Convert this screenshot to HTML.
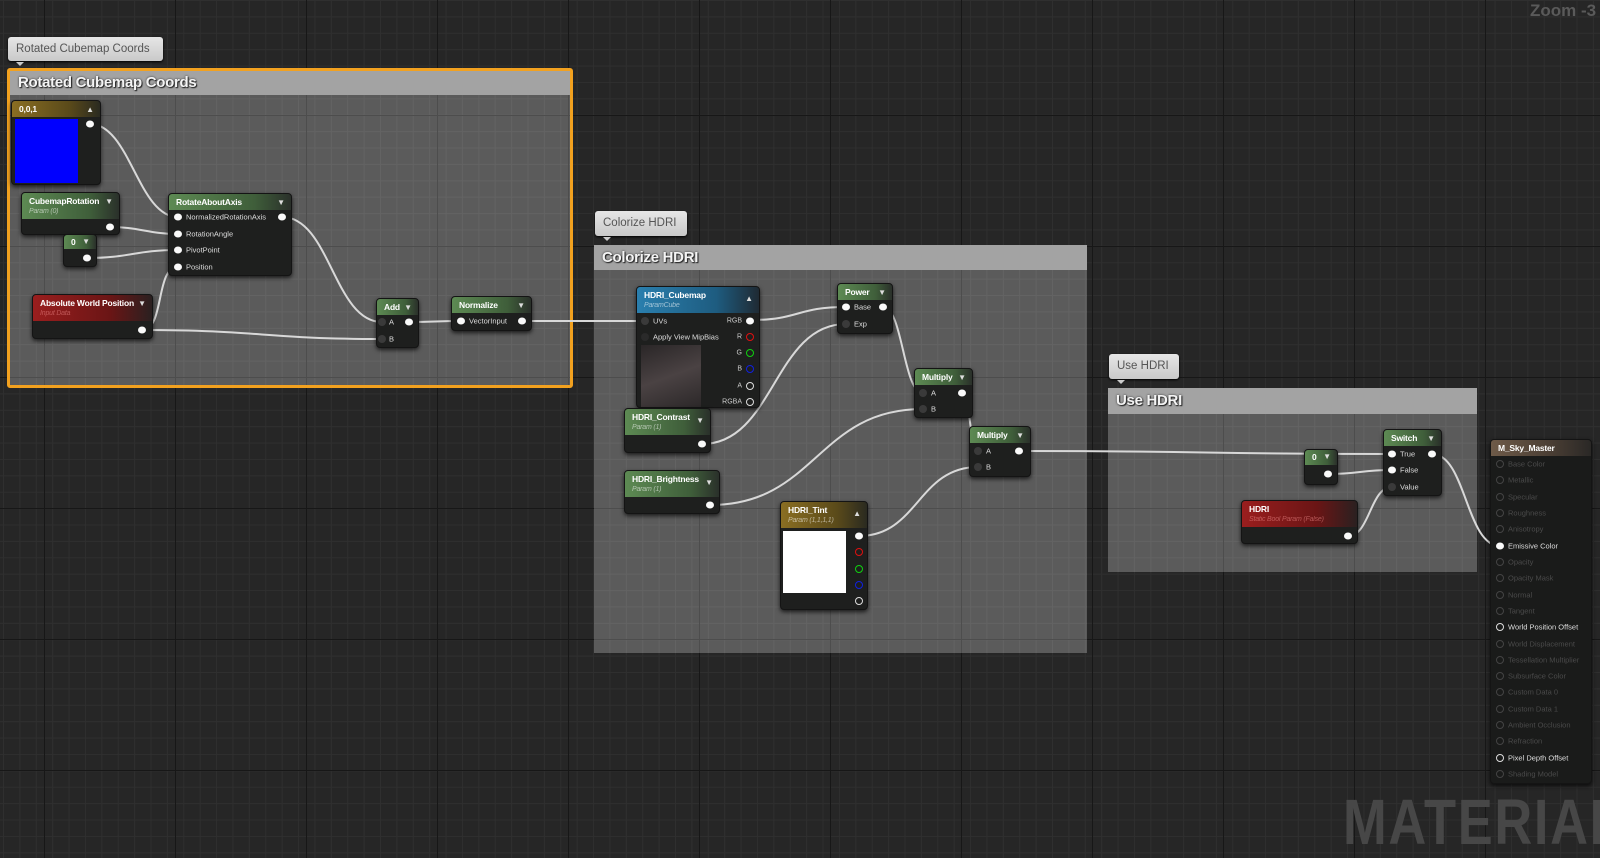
<!DOCTYPE html>
<html><head><meta charset="utf-8"><style>
*{margin:0;padding:0;box-sizing:border-box}
body{width:1600px;height:837px;overflow:hidden;position:relative;font-family:"Liberation Sans",sans-serif;
background-color:#262626;
background-image:
linear-gradient(to right,#171717 1px,transparent 1px),
linear-gradient(to bottom,#171717 1px,transparent 1px),
linear-gradient(to right,#2f2f2f 1px,transparent 1px),
linear-gradient(to bottom,#2f2f2f 1px,transparent 1px);
background-size:131px 131px,131px 131px,16.4px 16.4px,16.4px 16.4px;
background-position:44px 0,0 115px,3px 0,0 0;}
.bub{position:absolute;background:linear-gradient(#e6e6e6,#c9c9c9);border-radius:3px;color:#555;font-size:11.5px;padding:0 8px;line-height:24px;white-space:nowrap;box-shadow:0 1px 2px #000}
.bub:after{content:"";position:absolute;left:8px;bottom:-5px;border:4px solid transparent;border-top-color:#ccc;border-bottom:0}
.cm{position:absolute;background-color:#5b5b5b;
background-image:linear-gradient(to right,#4d4d4d 1px,transparent 1px),linear-gradient(to bottom,#4d4d4d 1px,transparent 1px),linear-gradient(to right,#636363 1px,transparent 1px),linear-gradient(to bottom,#636363 1px,transparent 1px);
background-size:131px 131px,131px 131px,16.4px 16.4px,16.4px 16.4px;background-position:44px 0,0 115px,3px 0,0 0;background-attachment:fixed}
.ch{position:absolute;left:0;right:0;top:0;background:#a3a3a3;color:#f4f4f4;font-weight:bold;font-size:15px;padding-left:8px;text-shadow:1px 1px 1px #222,0 0 2px #333;letter-spacing:-0.3px;white-space:nowrap}
.n{position:absolute;background:#1e1f1e;border-radius:4px;box-shadow:0 2px 4px rgba(0,0,0,.7);border:1px solid #141414}
.h{position:absolute;left:0;right:0;top:0;border-radius:3px 3px 0 0;color:#fff;font-weight:bold;font-size:8.5px;padding:3px 0 0 7px;white-space:nowrap;letter-spacing:-0.2px}
.h i{display:block;font-weight:normal;font-size:7px;margin-top:2px;opacity:.55}
.g{background:linear-gradient(to right,#5d8a53,#3f5e3a 70%,#2a302a)}
.r{background:linear-gradient(to right,#9a1e1e,#6a1515 65%,#2a2020)}
.y{background:linear-gradient(to right,#8a6e22,#5a4a1a 65%,#2a2a20)}
.b{background:linear-gradient(to right,#2a7fae,#1e5c80 65%,#1f2a33)}
.a{position:absolute;right:6px;top:4px;font-size:8px;color:#ddd}
.p{position:absolute;width:8px;height:7px;border-radius:50%;background:#fafafa;transform:translate(-50%,-50%)}
.o{position:absolute;width:8px;height:8px;border-radius:50%;border:1.6px solid #ddd;transform:translate(-50%,-50%)}
.d{position:absolute;width:8px;height:8px;border-radius:50%;background:#3a3a3a;transform:translate(-50%,-50%)}
.l{position:absolute;font-size:7.5px;color:#ddd;transform:translateY(-50%);white-space:nowrap}
.lr{position:absolute;font-size:7px;color:#ccc;transform:translate(-100%,-50%);white-space:nowrap}
.m{position:absolute;font-size:7.5px;color:#4a4a4a;transform:translateY(-50%);white-space:nowrap}
</style></head><body>

<div style="position:absolute;left:1530px;top:1px;font-size:17px;font-weight:bold;color:#5a5a5a">Zoom -3</div>
<div style="position:absolute;left:1343px;top:790px;font-size:64px;font-weight:bold;color:#474747;line-height:1;transform:scaleX(0.82);transform-origin:left top;letter-spacing:2px">MATERIAL</div>

<!-- comments -->
<div class="bub" style="left:8px;top:37px;width:155px;height:24px">Rotated Cubemap Coords</div>
<div class="cm" style="left:7px;top:68px;width:566px;height:320px;border:3px solid #f2a11f;border-radius:3px">
 <div class="ch" style="height:24px;line-height:24px">Rotated Cubemap Coords</div></div>

<div class="bub" style="left:595px;top:211px;width:92px;height:25px">Colorize HDRI</div>
<div class="cm" style="left:594px;top:245px;width:493px;height:408px">
 <div class="ch" style="height:25px;line-height:25px">Colorize HDRI</div></div>

<div class="bub" style="left:1109px;top:354px;width:70px;height:25px">Use HDRI</div>
<div class="cm" style="left:1108px;top:388px;width:369px;height:184px">
 <div class="ch" style="height:26px;line-height:26px">Use HDRI</div></div>

<!-- wires -->
<svg style="position:absolute;left:0;top:0" width="1600" height="837" fill="none" stroke="#d8d8d8" stroke-width="2">
<path d="M90 124 C130 124,138 217,178 217"/>
<path d="M110 227 C140 227,148 234,178 234"/>
<path d="M87 258 C130 258,135 250,178 250"/>
<path d="M142 330 C165 330,155 267,178 267"/>
<path d="M142 330 C260 330,264 339,382 339"/>
<path d="M282 217 C330 217,334 322,382 322"/>
<path d="M409 322 C435 322,435 321,461 321"/>
<path d="M522 321 C583 321,584 321,645 321"/>
<path d="M750 320 C800 320,796 307,846 307"/>
<path d="M702 444 C774 444,774 324,846 324"/>
<path d="M883 307 C903 307,903 393,923 393"/>
<path d="M710 505 C816 505,817 409,923 409"/>
<path d="M962 393 C970 393,970 451,978 451"/>
<path d="M859 536 C918 536,918 467,978 467"/>
<path d="M1019 451 C1205 451,1205 454,1392 454"/>
<path d="M1328 474 C1360 474,1360 470,1392 470"/>
<path d="M1348 536 C1370 536,1370 487,1392 487"/>
<path d="M1432 454 C1466 454,1466 546,1500 546"/>
</svg>

<!-- Rotated Cubemap nodes -->
<div class="n" style="left:11px;top:100px;width:90px;height:85px"><div class="h y" style="height:16px">0,0,1</div><span class="a">▲</span>
<div style="position:absolute;left:3px;top:18px;width:63px;height:64px;background:#0000ff"></div></div>
<span class="p" style="left:90px;top:124px"></span>

<div class="n" style="left:21px;top:192px;width:99px;height:43px"><div class="h g" style="height:26px">CubemapRotation<i>Param (0)</i></div><span class="a">▼</span></div>
<span class="p" style="left:110px;top:227px"></span>

<div class="n" style="left:63px;top:234px;width:34px;height:33px"><div class="h g" style="height:14px;padding-top:2px">0</div><span class="a" style="top:2px">▼</span></div>
<span class="p" style="left:87px;top:258px"></span>

<div class="n" style="left:168px;top:193px;width:124px;height:83px"><div class="h g" style="height:16px">RotateAboutAxis</div><span class="a">▼</span></div>
<span class="p" style="left:178px;top:217px"></span><span class="l" style="left:186px;top:217px">NormalizedRotationAxis</span>
<span class="p" style="left:178px;top:234px"></span><span class="l" style="left:186px;top:234px">RotationAngle</span>
<span class="p" style="left:178px;top:250px"></span><span class="l" style="left:186px;top:250px">PivotPoint</span>
<span class="p" style="left:178px;top:267px"></span><span class="l" style="left:186px;top:267px">Position</span>
<span class="p" style="left:282px;top:217px"></span>

<div class="n" style="left:32px;top:294px;width:121px;height:45px"><div class="h r" style="height:26px">Absolute World Position<i style="color:#e88">Input Data</i></div><span class="a">▼</span></div>
<span class="p" style="left:142px;top:330px"></span>

<div class="n" style="left:376px;top:298px;width:43px;height:50px"><div class="h g" style="height:16px">Add</div><span class="a">▼</span></div>
<span class="d" style="left:382px;top:322px"></span><span class="l" style="left:389px;top:322px">A</span>
<span class="d" style="left:382px;top:339px"></span><span class="l" style="left:389px;top:339px">B</span>
<span class="p" style="left:409px;top:322px"></span>

<div class="n" style="left:451px;top:296px;width:81px;height:35px"><div class="h g" style="height:16px">Normalize</div><span class="a">▼</span></div>
<span class="p" style="left:461px;top:321px"></span><span class="l" style="left:469px;top:321px">VectorInput</span>
<span class="p" style="left:522px;top:321px"></span>

<!-- Colorize nodes -->
<div class="n" style="left:636px;top:286px;width:124px;height:122px"><div class="h b" style="height:26px">HDRI_Cubemap<i>ParamCube</i></div><span class="a" style="top:7px">▲</span>
<div style="position:absolute;left:4px;top:58px;width:60px;height:62px;background:linear-gradient(160deg,#2a2627,#4a4243 50%,#2c2829)"></div></div>
<span class="d" style="left:645px;top:321px"></span><span class="l" style="left:653px;top:321px">UVs</span>
<span class="d" style="left:645px;top:337px;background:#2a2a2a"></span><span class="l" style="left:653px;top:337px">Apply View MipBias</span>
<span class="lr" style="left:742px;top:321px">RGB</span><span class="p" style="left:750px;top:321px"></span>
<span class="lr" style="left:742px;top:337px">R</span><span class="o" style="left:750px;top:337px;border-color:#e01010"></span>
<span class="lr" style="left:742px;top:353px">G</span><span class="o" style="left:750px;top:353px;border-color:#10d010"></span>
<span class="lr" style="left:742px;top:369px">B</span><span class="o" style="left:750px;top:369px;border-color:#1020e0"></span>
<span class="lr" style="left:742px;top:386px">A</span><span class="o" style="left:750px;top:386px"></span>
<span class="lr" style="left:742px;top:402px">RGBA</span><span class="o" style="left:750px;top:402px"></span>

<div class="n" style="left:624px;top:408px;width:87px;height:45px"><div class="h g" style="height:26px">HDRI_Contrast<i>Param (1)</i></div><span class="a" style="top:7px">▼</span></div>
<span class="p" style="left:702px;top:444px"></span>

<div class="n" style="left:624px;top:470px;width:96px;height:44px"><div class="h g" style="height:26px">HDRI_Brightness<i>Param (1)</i></div><span class="a" style="top:7px">▼</span></div>
<span class="p" style="left:710px;top:505px"></span>

<div class="n" style="left:780px;top:501px;width:88px;height:109px"><div class="h y" style="height:26px">HDRI_Tint<i>Param (1,1,1,1)</i></div><span class="a" style="top:7px">▲</span>
<div style="position:absolute;left:2px;top:29px;width:63px;height:62px;background:#fff"></div></div>
<span class="p" style="left:859px;top:536px"></span>
<span class="o" style="left:859px;top:552px;border-color:#e01010"></span>
<span class="o" style="left:859px;top:569px;border-color:#10d010"></span>
<span class="o" style="left:859px;top:585px;border-color:#1020e0"></span>
<span class="o" style="left:859px;top:601px"></span>

<div class="n" style="left:837px;top:283px;width:56px;height:51px"><div class="h g" style="height:16px">Power</div><span class="a">▼</span></div>
<span class="p" style="left:846px;top:307px"></span><span class="l" style="left:854px;top:307px">Base</span>
<span class="d" style="left:846px;top:324px"></span><span class="l" style="left:854px;top:324px">Exp</span>
<span class="p" style="left:883px;top:307px"></span>

<div class="n" style="left:914px;top:368px;width:59px;height:50px"><div class="h g" style="height:16px">Multiply</div><span class="a">▼</span></div>
<span class="d" style="left:923px;top:393px"></span><span class="l" style="left:931px;top:393px">A</span>
<span class="d" style="left:923px;top:409px"></span><span class="l" style="left:931px;top:409px">B</span>
<span class="p" style="left:962px;top:393px"></span>

<div class="n" style="left:969px;top:426px;width:62px;height:51px"><div class="h g" style="height:16px">Multiply</div><span class="a">▼</span></div>
<span class="d" style="left:978px;top:451px"></span><span class="l" style="left:986px;top:451px">A</span>
<span class="d" style="left:978px;top:467px"></span><span class="l" style="left:986px;top:467px">B</span>
<span class="p" style="left:1019px;top:451px"></span>

<!-- Use HDRI nodes -->
<div class="n" style="left:1304px;top:449px;width:34px;height:36px"><div class="h g" style="height:15px;padding-top:2px">0</div><span class="a" style="top:2px">▼</span></div>
<span class="p" style="left:1328px;top:474px"></span>

<div class="n" style="left:1383px;top:429px;width:59px;height:67px"><div class="h g" style="height:16px">Switch</div><span class="a">▼</span></div>
<span class="p" style="left:1392px;top:454px"></span><span class="l" style="left:1400px;top:454px">True</span>
<span class="p" style="left:1392px;top:470px"></span><span class="l" style="left:1400px;top:470px">False</span>
<span class="d" style="left:1392px;top:487px"></span><span class="l" style="left:1400px;top:487px">Value</span>
<span class="p" style="left:1432px;top:454px"></span>

<div class="n" style="left:1241px;top:500px;width:117px;height:44px"><div class="h r" style="height:26px">HDRI<i style="color:#e88;font-style:italic">Static Bool Param (False)</i></div></div>
<span class="p" style="left:1348px;top:536px"></span>

<!-- Material output -->
<div class="n" style="left:1490px;top:439px;width:102px;height:345px;background:#1a1b1a"><div class="h" style="height:16px;background:linear-gradient(to right,#6e5a48,#4a3e34 60%,#2a2826)">M_Sky_Master</div></div>
<span class="o" style="left:1500px;top:464px;border-color:#444"></span><span class="m" style="left:1508px;top:464px">Base Color</span>
<span class="o" style="left:1500px;top:480px;border-color:#444"></span><span class="m" style="left:1508px;top:480px">Metallic</span>
<span class="o" style="left:1500px;top:497px;border-color:#444"></span><span class="m" style="left:1508px;top:497px">Specular</span>
<span class="o" style="left:1500px;top:513px;border-color:#444"></span><span class="m" style="left:1508px;top:513px">Roughness</span>
<span class="o" style="left:1500px;top:529px;border-color:#444"></span><span class="m" style="left:1508px;top:529px">Anisotropy</span>
<span class="p" style="left:1500px;top:546px"></span><span class="l" style="left:1508px;top:546px">Emissive Color</span>
<span class="o" style="left:1500px;top:562px;border-color:#444"></span><span class="m" style="left:1508px;top:562px">Opacity</span>
<span class="o" style="left:1500px;top:578px;border-color:#444"></span><span class="m" style="left:1508px;top:578px">Opacity Mask</span>
<span class="o" style="left:1500px;top:595px;border-color:#444"></span><span class="m" style="left:1508px;top:595px">Normal</span>
<span class="o" style="left:1500px;top:611px;border-color:#444"></span><span class="m" style="left:1508px;top:611px">Tangent</span>
<span class="o" style="left:1500px;top:627px"></span><span class="l" style="left:1508px;top:627px">World Position Offset</span>
<span class="o" style="left:1500px;top:644px;border-color:#444"></span><span class="m" style="left:1508px;top:644px">World Displacement</span>
<span class="o" style="left:1500px;top:660px;border-color:#444"></span><span class="m" style="left:1508px;top:660px">Tessellation Multiplier</span>
<span class="o" style="left:1500px;top:676px;border-color:#444"></span><span class="m" style="left:1508px;top:676px">Subsurface Color</span>
<span class="o" style="left:1500px;top:692px;border-color:#444"></span><span class="m" style="left:1508px;top:692px">Custom Data 0</span>
<span class="o" style="left:1500px;top:709px;border-color:#444"></span><span class="m" style="left:1508px;top:709px">Custom Data 1</span>
<span class="o" style="left:1500px;top:725px;border-color:#444"></span><span class="m" style="left:1508px;top:725px">Ambient Occlusion</span>
<span class="o" style="left:1500px;top:741px;border-color:#444"></span><span class="m" style="left:1508px;top:741px">Refraction</span>
<span class="o" style="left:1500px;top:758px"></span><span class="l" style="left:1508px;top:758px">Pixel Depth Offset</span>
<span class="o" style="left:1500px;top:774px;border-color:#444"></span><span class="m" style="left:1508px;top:774px">Shading Model</span>
</body></html>
